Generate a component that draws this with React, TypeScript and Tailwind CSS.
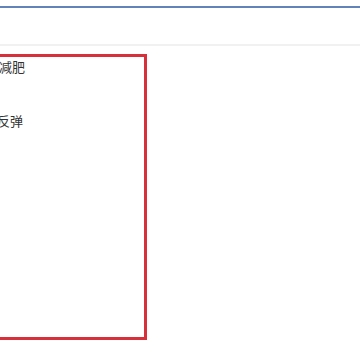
export default function App() {
  return (
    <div className="h-[360px] w-[360px] overflow-hidden bg-white font-['Noto_Sans_CJK_SC',sans-serif]">
      <div className="h-[6px] bg-white" />
      <div className="h-[2px] bg-[#6282ba]" />
      <div className="h-[36px] bg-white" />
      <div className="h-[2px] bg-[#f1f1f1]" />
      <div className="pt-[8px]">
        <div className="ml-[-10px] h-[286px] w-[157px] border-[3px] border-[#d8303b] pt-px text-[13px] leading-[18px] text-[#333]">
          <p className="ml-[6px]">减肥</p>
          <p className="ml-[4px] mt-[36px]">反弹</p>
        </div>
      </div>
    </div>
  )
}
